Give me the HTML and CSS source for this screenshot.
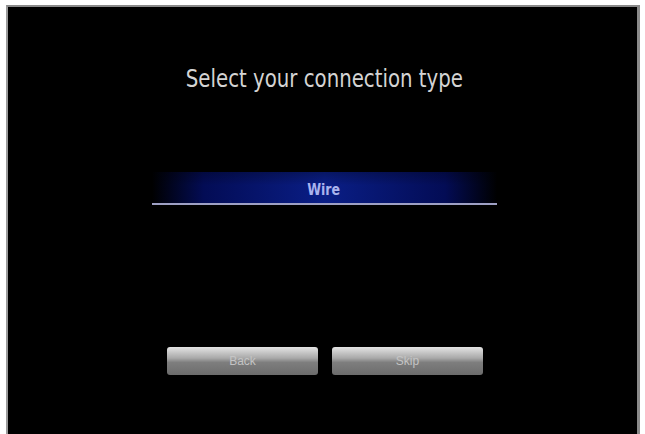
FILE: index.html
```html
<!DOCTYPE html>
<html>
<head>
<meta charset="utf-8">
<link rel="stylesheet" href="styles.css">
</head>
<body>
<div class="frame">
  <div class="screen">
    <h1 class="title">Select your connection type</h1>
    <div class="option selected"><span>Wire</span></div>
    <div class="buttons">
      <div class="btn">Back</div>
      <div class="btn">Skip</div>
    </div>
  </div>
</div>
</body>
</html>
```
FILE: styles.css
```css
html, body {
  margin: 0;
  padding: 0;
  background: #ffffff;
  width: 645px;
  height: 434px;
  overflow: hidden;
}
.frame {
  box-sizing: border-box;
  width: 645px;
  height: 434px;
  padding: 5px 5px 0 6px;
}
.screen {
  box-sizing: border-box;
  height: 429px;
  width: 634px;
  background: #000;
  border-top: 2px solid #8a8a8a;
  border-left: 2px solid #9a9a9a;
  border-right: 3px solid #8a8a8a;
  display: flex;
  flex-direction: column;
  align-items: center;
  font-family: "DejaVu Sans", sans-serif;
}
.title {
  margin: 55px 0 0 3px;
  font-weight: normal;
  font-size: 25px;
  line-height: 34px;
  color: #d4d4d4;
  transform: scaleX(0.79);
  white-space: nowrap;
}
.option {
  margin-top: 76px;
  margin-left: 3px;
  width: 345px;
  height: 33px;
  display: flex;
  align-items: center;
  justify-content: center;
  font-size: 15px;
  color: #aab4ee;
  font-weight: bold;
}
.option.selected {
  background:
    linear-gradient(to bottom, rgba(0,0,0,0) 0, rgba(0,0,0,0) 31px, #9ea0c4 31px, #9ea0c4 33px),
    linear-gradient(to bottom, rgba(0,0,0,0.25) 0%, rgba(0,0,0,0) 40%, rgba(0,0,0,0) 100%),
    linear-gradient(to right, rgba(0,0,40,0) 0%, #030c55 15%, #0a1e86 50%, #030c55 85%, rgba(0,0,40,0) 100%);
}
.option span {
  margin-top: 2px;
  transform: scaleX(0.84);
}
.buttons {
  margin-top: 142px;
  display: flex;
  gap: 14px;
  margin-left: 5px;
}
.btn {
  box-sizing: border-box;
  width: 151px;
  height: 28px;
  border-radius: 3px;
  background: linear-gradient(to bottom, #e4e4e4 0%, #a8a8a8 40%, #7e7e7e 55%, #6c6c6c 100%);
  color: #c4c4c4;
  font-size: 12px;
  display: flex;
  align-items: center;
  justify-content: center;
  font-family: "Liberation Sans", sans-serif;
}
```
